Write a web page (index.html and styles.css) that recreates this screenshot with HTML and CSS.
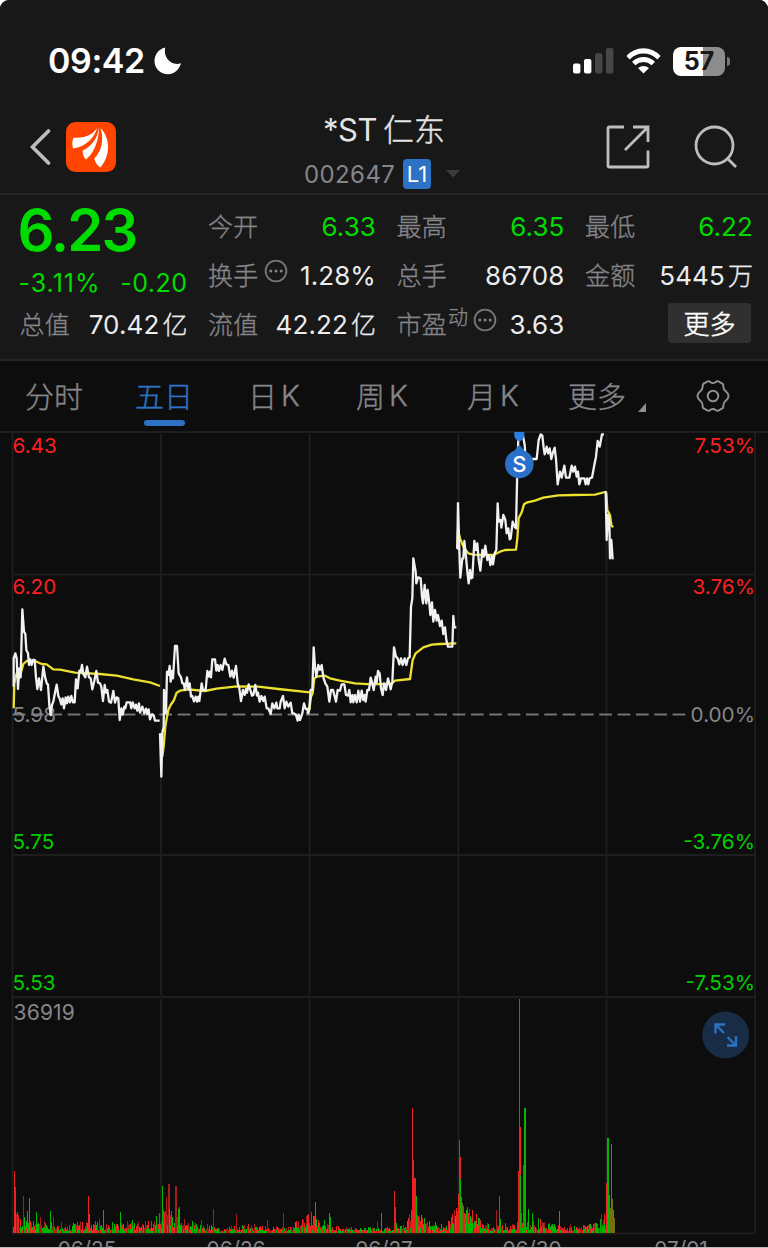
FILE: index.html
```html
<!DOCTYPE html>
<html lang="zh-CN">
<head>
<meta charset="utf-8">
<title>*ST仁东 002647</title>
<link rel="stylesheet" href="styles.css">
</head>
<body>
<main class="screen">
  <header class="top">
    <div class="status">
      <span class="clock">09:42</span>
      <svg class="moon" width="28" height="28" viewBox="0 0 28 28"><path fill="#fff" d="M11.2.6C9 9.8 16.500 19.500 27 16.300C25 23 20 27.300 14 27.300C6.500 27.300.5 21.500.5 14C.5 7.800 4.500 2.300 11.200.6Z"/></svg>
      <svg class="signal" width="41" height="26" viewBox="0 0 41 26"><g fill="#fff"><rect x="0" y="15.500" width="7.400" height="10" rx="2"/><rect x="11" y="11" width="7.400" height="14.500" rx="2"/></g><g fill="#474747"><rect x="22" y="5.300" width="7.400" height="20.200" rx="2"/><rect x="33" y="0" width="7.400" height="25.500" rx="2"/></g></svg>
      <svg class="wifi" width="35" height="26" viewBox="0 0 35 26"><g fill="#fff"><path d="M0.400 8Q7.500.3 17.500.3T34.600 8L31.300 11.400Q25.500 5.500 17.500 5.500T3.700 11.400Z"/><path d="M6 13.800Q11 9 17.500 9T29 13.800L25.600 17.200Q22 14 17.500 14T9.400 17.200Z"/><path d="M12 20Q17.500 15.800 23 20L17.500 25.500Z"/></g></svg>
      <span class="battery"><span class="level">57</span></span><span class="nub"></span>
    </div>
    <div class="nav">
      <svg class="back" width="22" height="38" viewBox="0 0 22 38"><path d="M19.500 3L3.500 19L19.500 35" fill="none" stroke="#bdbdbd" stroke-width="3.600" stroke-linecap="round"/></svg>
      <svg class="logo" width="50" height="50" viewBox="0 0 50 50"><rect width="50" height="50" rx="9.500" fill="#ff4500"/><g fill="#fff"><path d="M31 6C29 15 20 25 7 26.500C6 22 6 18.500 7.500 15.800C17 15.800 26 14.500 31 6Z"/><path d="M32.500 5.500C34 17 27 33 19.800 37.500C17 34 16.500 31 16.700 28.500C26 24 32 16 32.500 5.500Z"/><path d="M34.500 6C42 13 47 30 34.500 45.500C31 43.500 29 40 28.300 36.500C36 29 38 17 34.500 6Z"/></g></svg>
      <div class="title">
        <h1>*ST<span class="name">仁东</span></h1>
        <p><span class="code">002647</span><span class="l1">L1</span><svg width="14" height="8" viewBox="0 0 14 8"><path d="M0 0H14L7 7.500Z" fill="#3c3c3c"/></svg></p>
      </div>
      <svg class="share" width="44" height="44" viewBox="0 0 44 44"><g fill="none" stroke="#bdbdbd" stroke-width="2.800"><path d="M18 2H3.500Q2 2 2 3.500V40.500Q2 42 3.500 42H40.500Q42 42 42 40.500V25.500M19 25L42 2M27 2H42V17"/></g></svg>
      <svg class="search" width="44" height="44" viewBox="0 0 44 44"><g fill="none" stroke="#bdbdbd" stroke-width="2.800"><circle cx="20.500" cy="20.500" r="18.500"/><path d="M33.500 33.500L42 42"/></g></svg>
    </div>
  </header>

  <section class="quote">
    <div class="lead">
      <strong class="price">6.23</strong>
      <div class="change"><span class="pct">-3.11%</span><span>-0.20</span></div>
      <div class="cell"><span class="key">总值</span><span>70.42<i>亿</i></span></div>
    </div>
    <div class="col">
      <div class="cell"><span class="key">今开</span><span class="green">6.33</span></div>
      <div class="cell"><span class="key">换手</span><svg class="dots" width="24" height="24" viewBox="0 0 24 24"><circle cx="12" cy="12" r="10.400" fill="none" stroke="#77777b" stroke-width="1.800"/><g fill="#85858a"><circle cx="6.800" cy="12" r="1.500"/><circle cx="12" cy="12" r="1.500"/><circle cx="17.200" cy="12" r="1.500"/></g></svg><span>1.28%</span></div>
      <div class="cell"><span class="key">流值</span><span>42.22<i>亿</i></span></div>
    </div>
    <div class="col">
      <div class="cell"><span class="key">最高</span><span class="green">6.35</span></div>
      <div class="cell"><span class="key">总手</span><span>86708</span></div>
      <div class="cell"><span class="key">市盈<sup>动</sup></span><svg class="dots" width="24" height="24" viewBox="0 0 24 24"><circle cx="12" cy="12" r="10.400" fill="none" stroke="#77777b" stroke-width="1.800"/><g fill="#85858a"><circle cx="6.800" cy="12" r="1.500"/><circle cx="12" cy="12" r="1.500"/><circle cx="17.200" cy="12" r="1.500"/></g></svg><span>3.63</span></div>
    </div>
    <div class="col">
      <div class="cell"><span class="key">最低</span><span class="green">6.22</span></div>
      <div class="cell"><span class="key">金额</span><span>5445<i>万</i></span></div>
      <button class="more">更多</button>
    </div>
  </section>

  <nav class="tabs">
    <span class="tab">分时</span>
    <span class="tab active">五日</span>
    <span class="tab">日<b>K</b></span>
    <span class="tab">周<b>K</b></span>
    <span class="tab">月<b>K</b></span>
    <span class="tab">更多<svg class="corner" width="8" height="9" viewBox="0 0 8 9"><path d="M8 0V9H0Z" fill="#8e8e93"/></svg></span>
    <svg class="gear" width="34" height="34" viewBox="-17 -17 34 34"><g fill="none" stroke="#8e8e93" stroke-width="2"><path d="M-5 -14.800Q-3.500 -15 -2.500 -13.800Q0 -12 2.500 -13.800Q3.500 -15 5 -14.800L9.700 -12.200Q10.500 -11.500 10.300 -9.500Q10.300 -6.500 13 -4.500Q15.400 -2.500 15.600 0Q15.400 2.500 13 4.500Q10.300 6.500 10.300 9.500Q10.500 11.500 9.700 12.200L5 14.800Q3.500 15 2.500 13.800Q0 12 -2.500 13.800Q-3.500 15 -5 14.800L-9.700 12.200Q-10.500 11.500 -10.300 9.500Q-10.300 6.500 -13 4.500Q-15.400 2.500 -15.600 0Q-15.400 -2.500 -13 -4.500Q-10.300 -6.500 -10.300 -9.500Q-10.500 -11.500 -9.700 -12.200Z"/><circle r="5.300"/></g></svg>
  </nav>

  <svg class="chart" width="768" height="817" viewBox="0 431 768 817">
    <defs><clipPath id="plot"><rect x="12" y="433" width="744" height="564"/></clipPath></defs>
    <path class="grid" d="M0 432H768M12 574.500H755M12 855H755M12 997H755M12 1233.500H755M12.500 432V1233M755 432V1233M161 434V995M309.500 434V995M458.500 434V995M606.500 434V995M161 999V1233M309.500 999V1233M458.500 999V1233M606.500 999V1233"/>
    <path class="zero" d="M12.700 714.500H690"/>
    <g class="axis">
      <text class="up" x="12.500" y="453">6.43</text><text class="up end" x="755" y="453">7.53%</text>
      <text class="up" x="12.500" y="594">6.20</text><text class="up end" x="755" y="594">3.76%</text>
      <text x="12.500" y="721.500">5.98</text><text class="end" x="755" y="721.500">0.00%</text>
      <text class="down" x="12.500" y="849">5.75</text><text class="down end" x="755" y="849">-3.76%</text>
      <text class="down" x="12.500" y="990">5.53</text><text class="down end" x="755" y="990">-7.53%</text>
      <text class="max" x="13.500" y="1019.500">36919</text>
    </g>
    <g class="axis dates">
      <text x="87" y="1256">06/25</text><text x="236" y="1256">06/26</text><text x="384" y="1256">06/27</text><text x="532" y="1256">06/30</text><text x="681" y="1256">07/01</text>
    </g>
    <g id="volume" shape-rendering="crispEdges"></g>
    <g clip-path="url(#plot)">
      <g transform="translate(0 590) scale(.33333)">
        <polyline class="avg" points="41,355 43,280 50,250 62,250 70,222 80,213 105,213 125,222 140,223 160,238 180,239 225,248 300,252 350,257 400,268 450,277 480,288"/>
        <polyline class="line" points="41,290 41,205 46,190 50,205 54,297 58,235 62,262 67,58 72,125 76,132 79,180 84,190 87,225 91,208 95,225 99,210 104,210 108,262 112,297 117,265 123,300 130,230 136,265 141,282 144,283 148,345 152,375 156,345 160,335 165,308 170,284 175,318 180,328 184,343 188,325 192,355 197,322 201,340 205,320 210,337 214,318 219,337 224,337 228,268 233,295 238,242 242,245 246,225 250,252 256,262 261,230 267,262 272,265 277,298 283,272 289,243 294,278 300,280 304,290 309,333 314,285 318,308 322,300 327,335 333,338 340,303 345,338 350,322 355,325 359,390 364,355 368,374 373,350 376,355 380,337 390,337 394,355 398,337 404,355 408,344 412,362 417,340 420,368 427,350 433,370 438,356 442,372 446,358 450,388 456,373 461,376 465,392 479,392"/>
      </g>
      <g transform="translate(155 630) scale(.33333)">
        <polyline class="avg" points="22,380 26,350 31,290 36,260 40,240 47,225 57,210 65,188 75,182 100,178 150,183 185,176 245,169 310,170 370,177 465,187"/>
        <polyline class="line" points="15,310 19,440 22,310 26,290 27,180 33,250 36,125 40,135 44,108 47,155 52,122 54,145 60,48 66,48 71,130 78,142 82,160 86,160 90,180 96,142 100,178 104,160 108,200 112,198 117,214 122,200 126,215 130,200 133,213 140,160 144,180 152,180 157,123 161,140 165,125 168,142 172,88 180,88 184,122 188,105 192,123 197,105 202,120 209,86 214,103 220,105 226,140 231,122 236,143 243,108 248,160 253,175 258,213 264,180 269,195 273,177 276,188 281,163 286,180 291,197 295,195 301,165 306,197 309,188 314,215 319,198 325,213 329,200 335,235 340,235 347,252 352,220 358,235 364,218 367,235 374,235 377,215 384,198 389,235 394,215 400,230 407,218 412,250 417,250 423,255 428,272 431,255 435,270 442,250 447,220 452,237 457,237 460,250 463,235"/>
      </g>
      <g transform="translate(300 540) scale(.33333)">
        <polyline class="avg" points="28,510 33,470 38,460 43,415 50,410 75,407 90,415 120,422 165,430 215,433 275,431 285,422 330,417 338,360 347,340 370,322 395,314 420,312 469,310"/>
        <polyline class="line" points="22,520 28,505 32,450 37,450 41,322 45,380 49,410 55,375 60,390 65,375 70,412 76,430 82,440 88,485 93,450 99,450 103,465 108,485 113,450 120,452 125,433 133,433 138,465 144,467 148,450 152,487 157,465 160,487 165,465 170,487 175,452 180,485 185,452 190,480 194,465 197,485 202,450 207,450 212,413 217,430 221,450 227,410 230,428 234,393 239,400 243,445 248,465 252,430 258,450 264,415 268,430 272,448 277,425 282,322 288,350 293,355 298,373 303,355 308,375 314,355 319,375 324,355 329,352 333,200 337,175 340,55 347,95 349,130 354,112 362,115 366,170 369,190 374,135 379,190 383,150 388,190 391,225 396,187 400,245 405,210 410,242 414,225 420,258 425,242 430,282 435,262 439,300 444,320 457,320 460,228 463,262 469,262"/>
      </g>
      <g transform="translate(450 425) scale(.33333)">
        <polyline class="avg" points="22,370 24,315 30,340 40,365 55,385 70,389 130,390 150,380 165,375 198,374 202,340 206,280 215,262 222,238 232,232 255,227 280,218 325,211 370,210 435,209 465,201"/>
        <polyline class="avg" points="469,203 472,255 480,270 484,300 489,307"/>
        <polyline class="line" points="24,232 22,370 24,235 28,375 31,458 37,400 40,400 43,348 48,395 52,440 56,475 60,435 64,460 67,458 73,348 78,375 82,355 86,405 91,437 97,375 101,395 106,362 112,405 117,390 121,420 126,395 129,418 134,385 139,375 143,235 146,290 152,285 154,308 160,270 166,285 170,325 175,310 179,343 182,340 188,290 194,305 198,310 202,130 206,15 216,15 220,38 224,60 229,135 235,100 240,135 247,102 260,102 266,45 272,28 277,32 281,68 284,88 290,65 294,85 299,70 304,102 308,85 314,68 318,102 323,178 330,140 335,158 343,122 348,158 358,158 365,122 370,140 375,125 380,155 384,140 388,178 393,160 403,160 407,178 411,160 415,178 419,160 426,158 433,120 438,95 443,48 449,65 456,28 462,28"/>
        <polyline class="line" points="467,198 470,345 474,270 478,285 480,400 484,345 488,403"/>
      </g>
    </g>
    <path class="pin-top" d="M514.300 432H524.300V436Q523.500 439.500 519.300 441.500Q515.100 439.500 514.300 436Z"/>
    <path class="pin" d="M519.300 444.500L524 450.500A14.300 14.300 0 1 1 514.600 450.500Z"/>
    <text class="pin-text" x="519.300" y="471.700">S</text>
    <circle cx="725.700" cy="1035" r="23.500" fill="#182c45"/>
    <path class="expand" d="M724 1033L715.500 1024.500M715.500 1033.500V1024.500H725M727.500 1037L736 1045.500M736 1036V1045.500H727"/>
  </svg>
</main>
<script src="chart.js"></script>
</body>
</html>
```
FILE: styles.css
```css
* { box-sizing: border-box; }
body { margin: 0; background: #fff; font-family: Inter, "Noto Sans CJK SC", sans-serif; color: #ececec; }
.screen { width: 768px; height: 1248px; background: #0d0d0d; border-radius: 9px 9px 0 0; overflow: hidden; border-bottom: 1px solid #bcbcbc; }
.top { height: 195px; background: #181818; border-bottom: 2px solid #262626; }
.status { display: flex; align-items: center; height: 90px; padding: 32px 0 0 48px; }
.clock { width: 97px; font-size: 34px; font-weight: 600; line-height: 40px; letter-spacing: -.4px; color: #fff; white-space: nowrap; }
.moon { margin-left: 9px; }
.signal { margin-left: 391px; }
.wifi { margin-left: 12px; }
.battery { width: 52px; height: 29px; margin-left: 12px; border-radius: 8px; background: linear-gradient(90deg, #fff 57%, #8d8d8d 57%); text-align: center; }
.level { display: block; font-size: 25px; line-height: 29px; font-weight: 700; color: #181818; }
.nub { width: 3px; height: 9px; margin-left: 2px; border-radius: 0 4px 4px 0; background: #757575; }
.nav { display: flex; height: 102px; padding: 19px 0 0 29px; }
.back { margin-top: 19px; }
.logo { margin: 13px 0 0 15px; }
.title { width: 208px; margin-left: 164px; text-align: center; }
.title h1 { margin: 0; font-size: 31px; line-height: 42px; font-weight: 400; letter-spacing: -.4px; color: #e4e4e4; }
.name { margin-left: 6px; font-weight: 300; letter-spacing: 0; -webkit-text-stroke: .4px; }
.title p { display: flex; align-items: center; justify-content: flex-start; height: 30px; margin: 8px 0 0 24px; }
.code { width: 99px; text-align: left; color: #85858a; font-size: 24px; letter-spacing: .4px; }
.l1 { width: 28px; height: 30px; margin-right: 15px; border-radius: 4px; background: #2d72c4; color: #fff; font-size: 22px; line-height: 31px; }
.share { margin: 16px 0 0 118px; }
.search { margin: 16px 0 0 44px; }
.quote { display: grid; grid-template-columns: repeat(4, 168px); column-gap: 20.500px; height: 166px; padding: 7px 0 0 19.500px; background: #181818; border-bottom: 2px solid #262626; }
.price { display: block; height: 55px; margin-left: -2px; font-size: 58px; line-height: 57px; font-weight: 600; letter-spacing: -2px; color: #00dc00; }
.change { display: flex; justify-content: space-between; height: 43px; font-size: 25px; line-height: 52px; color: #00dc00; letter-spacing: .5px; }
.pct { margin-left: -1px; letter-spacing: 1px; }
.cell { display: flex; justify-content: space-between; height: 49px; font-size: 26px; line-height: 49px; letter-spacing: .1px; white-space: nowrap; }
.key, .cell i { font-family: "Noto Sans CJK SC", sans-serif; font-size: 25px; font-weight: 300; font-style: normal; -webkit-text-stroke: .35px; }
.key { line-height: 47px; letter-spacing: .3px; color: #85858a; }
.cell i { margin-left: 3px; line-height: 1; }
.key sup { margin-left: 1px; font-size: 20px; line-height: 0; vertical-align: 9px; }
.dots { margin: 8px auto 0 5px; }
.green { color: #00dc00; }
.more { display: block; width: 83px; height: 40px; margin: 3px 0 0 83px; padding: 0; border: 0; border-radius: 4px; background: #303030; color: #fff; font: 300 26px/38px "Noto Sans CJK SC", sans-serif; -webkit-text-stroke: .5px; }
.tabs { display: grid; grid-template-columns: 110px 113px 108px 111px 101px 128px 34px; align-items: start; height: 70px; padding: 5px 0 0 25px; color: #85858a; font: 300 29px/59px "Noto Sans CJK SC", sans-serif; -webkit-text-stroke: .4px; }
.tab { display: flex; height: 61px; }
.tab b { margin-left: 4px; font: 300 29px/60px Inter, sans-serif; }
.active { flex-direction: column; justify-self: start; align-items: center; color: #2d72c4; }
.active::after { content: ""; width: 41px; height: 6px; margin-top: -5px; border-radius: 3px; background: #2d72c4; }
.corner { margin: 37px 0 0 12px; }
.gear { margin-top: 13px; -webkit-text-stroke: 0; }
.chart { display: block; }
.grid { fill: none; stroke: #1e1e1f; stroke-width: 1.800; }
.zero { stroke: #737378; stroke-width: 1.900; stroke-dasharray: 12.700 5.630; }
.line, .avg { fill: none; stroke-width: 2.300; stroke-linejoin: round; vector-effect: non-scaling-stroke; }
.line { stroke: #f1f1f1; }
.avg { stroke: #ede12f; }
.axis { font-family: Inter, sans-serif; font-size: 20.700px; fill: #85858a; }
.axis .up { fill: #fa2020; }
.axis .down { fill: #00d000; }
.axis .end { text-anchor: end; }
.axis .max { font-size: 21px; letter-spacing: .2px; }
.dates { text-anchor: middle; }
.pin-top { fill: #2c7fe0; }
.pin { fill: #2b70c8; }
.pin-text { fill: #fff; font: 500 22px Inter, sans-serif; text-anchor: middle; }
.expand { fill: none; stroke: #2d72c4; stroke-width: 2.300; }
.vol-r { fill: #ee2020; }
.vol-g { fill: #00b800; }
.vol-dr { fill: #a81c1c; }
.vol-m { fill: #6f6b0a; }
```
FILE: chart.js
```js
// Volume bars: a low background per minute, then the named peaks [x, height, class].
const BASE = 1233;
const layer = document.getElementById("volume");
let seed = 41;
const rand = () => (seed = (seed * 16807) % 2147483647) / 2147483647;
function bar(x, h, kind, w = 1) {
  const r = document.createElementNS("http://www.w3.org/2000/svg", "rect");
  r.setAttribute("x", x);
  r.setAttribute("y", BASE - h);
  r.setAttribute("width", w);
  r.setAttribute("height", h);
  r.setAttribute("class", "vol-" + kind);
  layer.appendChild(r);
}
// Typical level along the time axis: [x, level]
const levels = [[13,20],[22,12],[34,9],[42,9],[54,8],[60,3],[72,7],[90,9],[108,6],[130,8],[150,9],[160,17],[172,20],[185,8],[205,7],[220,3],[250,7],[270,5],[290,5],[305,14],[315,14],[322,7],[345,4],[370,4],[400,5],[409,14],[417,20],[425,9],[445,7],[456,20],[464,24],[478,12],[495,5],[516,8],[530,9],[545,8],[570,4],[595,7],[604,14],[615,20]];
function level(x) {
  let i = 1;
  while (i < levels.length - 1 && levels[i][0] < x) i++;
  const [x0, a] = levels[i - 1], [x1, b] = levels[i];
  return a + (b - a) * (x - x0) / (x1 - x0);
}
for (let x = 13; x < 615; x++) {
  const l = level(x), tall = 1 + l * (.25 + rand() * 1.05);
  const green = rand() > .62;
  bar(x, tall, green ? "g" : rand() > .45 ? "r" : "dr");
  if (rand() > .45) bar(x, tall * .45, green ? "r" : "g");
}
const peaks = [[14,62,"r"],[15,46,"r"],[15,22,"g"],[17,21,"r"],[18,18,"r"],[23,37,"dr"],[24,16,"g"],[27,22,"g"],[29,35,"g"],[36,21,"g"],[40,16,"dr"],[50,22,"g"],[53,16,"dr"],[61,11,"dr"],[88,37,"r"],[89,19,"g"],[99,14,"dr"],[103,23,"g"],[112,11,"g"],[120,21,"g"],[127,12,"dr"],[132,13,"g"],[156,17,"g"],[162,47,"g"],[164,21,"r"],[166,36,"dr"],[168,49,"dr"],[169,49,"dr"],[169,24,"g"],[171,22,"r"],[175,47,"dr"],[176,47,"dr"],[178,24,"g"],[179,26,"g"],[184,14,"dr"],[192,12,"g"],[201,13,"dr"],[213,24,"dr"],[236,19,"dr"],[254,9,"dr"],[267,13,"dr"],[283,20,"dr"],[295,11,"g"],[303,13,"dr"],[308,19,"r"],[311,21,"r"],[314,17,"r"],[315,31,"g"],[324,13,"g"],[329,20,"g"],[330,16,"g"],[377,12,"dr"],[381,20,"g"],[394,42,"r"],[395,26,"r"],[396,10,"g"],[411,23,"r"],[412,125,"r"],[413,73,"r"],[414,55,"r"],[415,55,"r"],[416,37,"g"],[418,17,"r"],[424,15,"g"],[429,12,"g"],[454,23,"dr"],[458,39,"r"],[459,93,"r"],[459,40,"r"],[460,76,"r"],[460,54,"g"],[461,36,"g"],[462,30,"m"],[463,26,"r"],[464,20,"r"],[467,26,"m"],[470,17,"g"],[476,19,"r"],[496,23,"dr"],[499,37,"r"],[500,14,"g"],[505,10,"r"],[518,62,"r"],[520,106,"r"],[521,20,"r"],[523,68,"r"],[524,125,"g"],[525,125,"g"],[528,24,"g"],[532,20,"g"],[538,15,"g"],[540,14,"r"],[559,22,"g"],[570,9,"dr"],[601,19,"dr"],[606,50,"r"],[607,95,"g"],[608,95,"g"],[609,38,"g"],[610,25,"m"],[611,89,"g"],[612,34,"m"],[613,23,"g"],[614,14,"m"]];
peaks.forEach(([x, h, k]) => bar(x, h, k));
bar(519, 234, "r");
bar(520, 58, "g");
```
